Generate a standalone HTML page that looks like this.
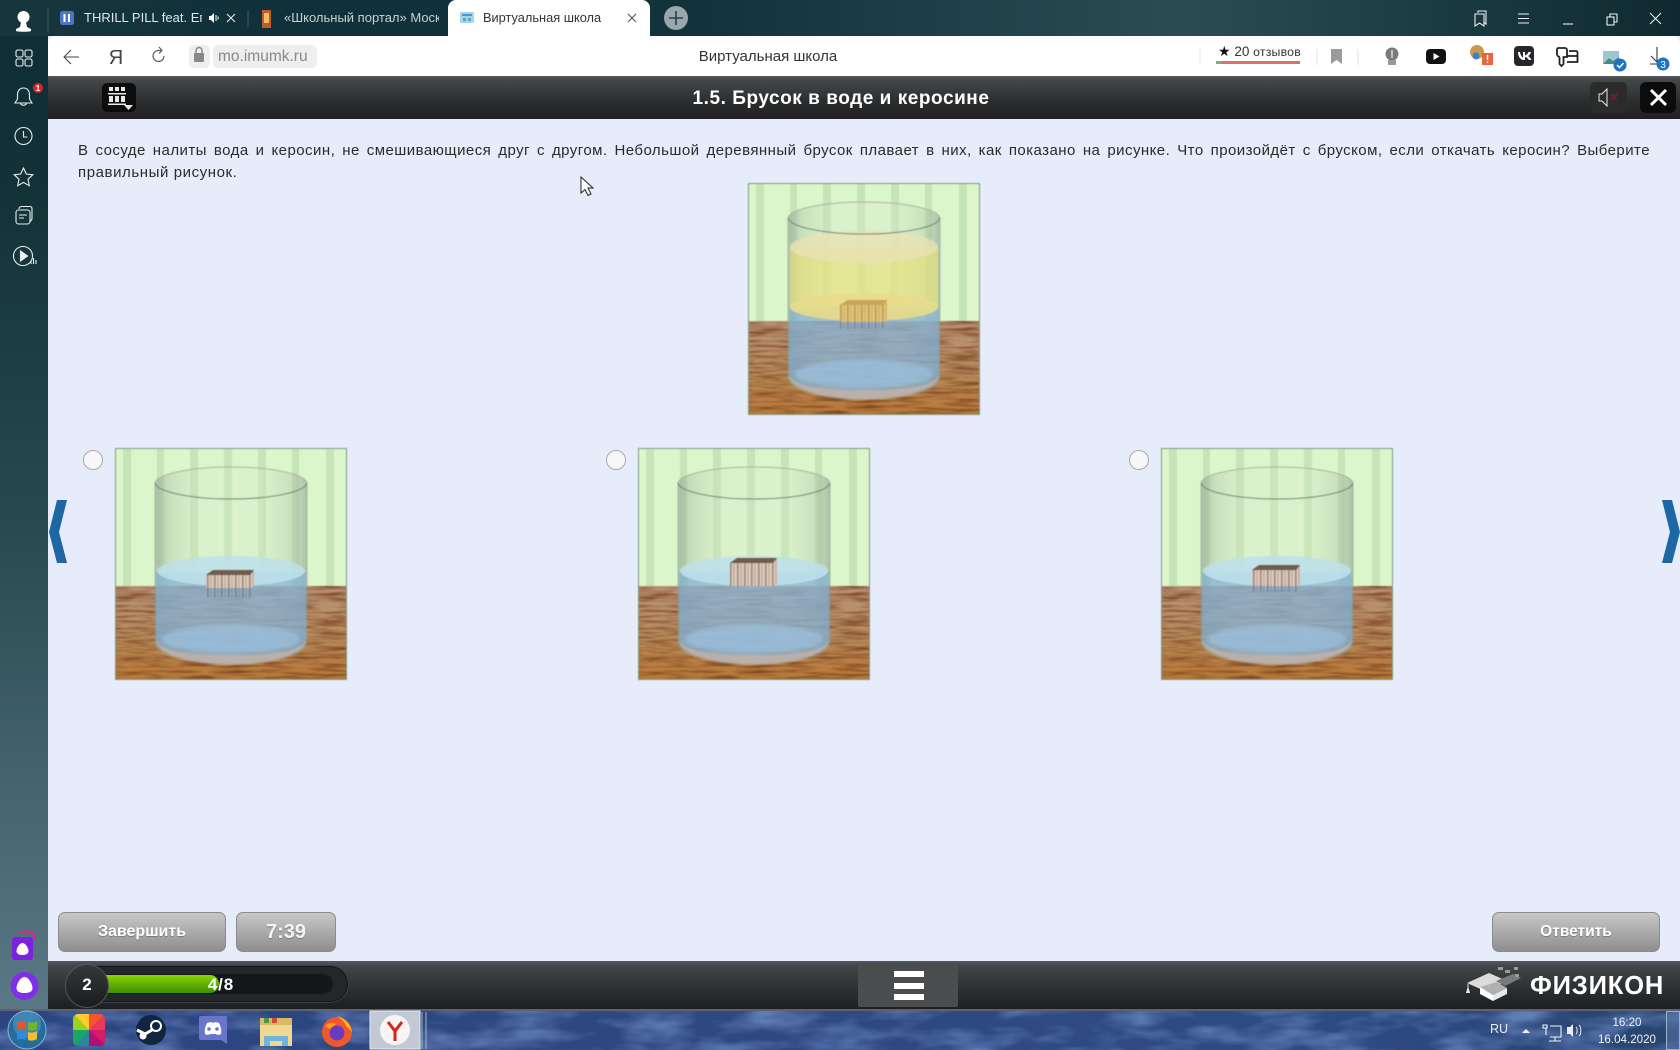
<!DOCTYPE html>
<html lang="ru"><head><meta charset="utf-8"><title>Виртуальная школа</title>
<style>
html,body{margin:0;padding:0;width:1680px;height:1050px;overflow:hidden;background:#e6ecfa;font-family:"Liberation Sans","DejaVu Sans",sans-serif}
.a{position:absolute}
.t{position:absolute;white-space:nowrap}
.pic{position:absolute;filter:blur(.45px)}
.btn{position:absolute;top:912px;height:38px;line-height:38px;border:1px solid #8b8b8b;border-radius:7px;background:linear-gradient(#c8c8c8,#8e8e8e);color:#fff;font-weight:bold;text-align:center;text-shadow:0 1px 1px #777}
</style></head><body>

<svg width="0" height="0" style="position:absolute">
<defs>
<filter id="wood" x="0" y="0" width="100%" height="100%" color-interpolation-filters="sRGB">
<feTurbulence type="fractalNoise" baseFrequency="0.03 0.35" numOctaves="3" seed="4"/>
<feColorMatrix values="0 0 0 0 .48  0 0 0 0 .26  0 0 0 0 .12  2 0 0 0 -.78"/>
<feComposite in2="SourceGraphic" operator="in"/>
<feMerge><feMergeNode in="SourceGraphic"/><feMergeNode/></feMerge>
</filter>
<filter id="sky" x="0" y="0" width="100%" height="100%" color-interpolation-filters="sRGB">
<feTurbulence type="fractalNoise" baseFrequency="0.016 0.05" numOctaves="3" seed="9"/>
<feColorMatrix values="0 0 0 0 .38  0 0 0 0 .49  0 0 0 0 .72  2.400 0 0 0 -.95"/>
<feComposite in2="SourceGraphic" operator="in"/>
<feMerge><feMergeNode in="SourceGraphic"/><feMergeNode/></feMerge>
</filter>
<filter id="b1"><feGaussianBlur stdDeviation="1.5"/></filter>
<filter id="b2"><feGaussianBlur stdDeviation=".7"/></filter>
<linearGradient id="tbl" x1="0" y1="0" x2="0" y2="1"><stop offset="0" stop-color="#b89478"/><stop offset=".5" stop-color="#b88c60"/><stop offset="1" stop-color="#b87836"/></linearGradient>
<linearGradient id="gl" x1="0" y1="0" x2="1" y2="0">
<stop offset="0" stop-color="#8a9b90" stop-opacity=".55"/><stop offset=".1" stop-color="#aebda6" stop-opacity=".38"/><stop offset=".3" stop-color="#d8e5ce" stop-opacity=".28"/><stop offset=".7" stop-color="#d8e5ce" stop-opacity=".28"/><stop offset=".9" stop-color="#aebda6" stop-opacity=".38"/><stop offset="1" stop-color="#8a9b90" stop-opacity=".58"/></linearGradient>
<pattern id="bs" width="7" height="30" patternUnits="userSpaceOnUse"><rect width="7" height="30" fill="#dccabc"/><rect x="1" width="1.6" height="30" fill="#a08a7c"/><rect x="4.500" width="1" height="30" fill="#b8a494"/></pattern>
<pattern id="by" width="7" height="30" patternUnits="userSpaceOnUse"><rect width="7" height="30" fill="#e0c478"/><rect x="1" width="1.6" height="30" fill="#bb9c58"/><rect x="4.500" width="1" height="30" fill="#cbae66"/></pattern>
<pattern id="br" width="7" height="30" patternUnits="userSpaceOnUse"><rect x="1" width="1.6" height="30" fill="#6f7f8c"/><rect x="4.500" width="1" height="30" fill="#7f8e9a"/></pattern>
<symbol id="bg" viewBox="0 0 232 232">
<rect width="232" height="138" fill="#dbf6ca"/>
<g fill="#c6e5b6"><rect x="8" width="8" height="138"/><rect x="42" width="7" height="138"/><rect x="75" width="8" height="138"/><rect x="109" width="8" height="138"/><rect x="143" width="8" height="138"/><rect x="177" width="7" height="138"/><rect x="211" width="8" height="138"/></g>
<rect y="138" width="232" height="94" fill="url(#tbl)" filter="url(#wood)"/>
<path d="M40 35A76 16 0 0 1 192 35V195C192 208 158 217 116 217S40 208 40 195Z" fill="url(#gl)"/>
</symbol>
<symbol id="water" viewBox="0 0 232 232">
<path d="M41 124V192C41 206 75 216 116 216S191 206 191 192V124Z" fill="#7eaedb" opacity=".66"/>
<path d="M41 192C41 206 75 216 116 216S191 206 191 192C186 205 150 207 116 207S46 205 41 192Z" fill="#c8b4a8" opacity=".75" filter="url(#b2)"/>
<ellipse cx="116" cy="191" rx="69" ry="14" fill="#9cc4e4" opacity=".65" filter="url(#b1)"/>
</symbol>
<symbol id="rim" viewBox="0 0 232 232">
<path d="M40 35V192M192 35V192" stroke="#8a9a8e" stroke-width="1" stroke-opacity=".55" fill="none"/>
<path d="M40 35C42 44 76 51 116 51S190 44 192 35" fill="none" stroke="#66796a" stroke-width="1.100" stroke-opacity=".8"/>
<path d="M40 35C42 26 76 19 116 19S190 26 192 35" fill="none" stroke="#a8b5a5" stroke-width="1"/>
<path d="M41 190v6M191 190v6" stroke="#9aa0a0" stroke-opacity=".6"/>
</symbol>
</defs>
</svg>

<!-- wallpaper chrome -->
<div class="a" style="left:0;top:0;width:48px;height:1011px;background:linear-gradient(#0f2c33 0,#133339 200px,#284950 520px,#44636d 780px,#5a7885 1011px)"></div>
<div class="a" style="left:0;top:0;width:1680px;height:36px;background:linear-gradient(90deg,#17363c 0,#10303a 300px,#12333c 700px,#2b4c53 1180px,#1d3e45 1400px,#0e2a30 1680px)"></div>

<!-- toolbar -->
<div class="a" style="left:48px;top:36px;width:1632px;height:40px;background:#fff;border-radius:8px 8px 0 0"></div>
<div class="a" style="left:448px;top:0;width:202px;height:37px;background:#fff;border-radius:8px 8px 0 0"></div>

<!-- tab text -->
<div class="t" style="left:84px;top:10px;width:118px;overflow:hidden;font-size:13px;line-height:16px;color:#dfe6e8">THRILL PILL feat. Егор Крид</div>
<div class="t" style="left:284px;top:10px;width:155px;overflow:hidden;font-size:13px;line-height:16px;color:#c8d2d5">«Школьный портал» Московская</div>
<div class="t" style="left:483px;top:10px;font-size:12.8px;line-height:16px;color:#333">Виртуальная школа</div>

<!-- address -->
<div class="a" style="left:189px;top:45px;width:21px;height:23px;border-radius:5px;background:#eee"></div>
<div class="a" style="left:213px;top:45px;width:104px;height:23px;border-radius:5px;background:#eee"></div>
<div class="t" style="left:218px;top:47px;font-size:15.5px;line-height:20px;color:#888">mo.imumk.ru</div>
<div class="t" style="left:668px;top:47px;width:200px;text-align:center;font-size:15px;line-height:20px;color:#333">Виртуальная школа</div>
<div class="t" style="left:1218px;top:42px;font-size:13.5px;line-height:18px;color:#333"><span style="color:#111;font-size:14px">★</span> 20 <span style="font-size:12.3px;letter-spacing:.2px">отзывов</span></div>
<div class="a" style="left:1216px;top:61px;width:84px;height:3px;background:linear-gradient(90deg,#7fb07a 0,#7fb07a 5px,#d8736a 6px)"></div>

<!-- header -->
<div class="a" style="left:48px;top:76px;width:1632px;height:43px;background:linear-gradient(#5a5d60 0,#46494b 6%,#2d2f31 55%,#1e2022 100%)"></div>
<div class="t" style="left:48px;top:87px;width:1586px;text-align:center;font-size:19px;line-height:24px;font-weight:bold;color:#fff;letter-spacing:.55px">1.5. Брусок в воде и керосине</div>

<!-- content -->
<div class="a" style="left:48px;top:119px;width:1632px;height:842px;background:#e7ecfa"></div>
<div class="a" style="left:78px;top:139.500px;width:1572px;font-size:15px;line-height:21px;color:#2b2b2b;letter-spacing:.45px;text-align:justify;text-align-last:justify">В сосуде налиты вода и керосин, не смешивающиеся друг с другом. Небольшой деревянный брусок плавает в них, как показано на рисунке. Что произойдёт с бруском, если откачать керосин? Выберите</div>
<div class="t" style="left:78px;top:161.500px;font-size:15px;line-height:21px;color:#2b2b2b;letter-spacing:.58px">правильный рисунок.</div>

<!-- top picture -->
<svg class="pic" style="left:748px;top:183px" width="232" height="232" viewBox="0 0 232 232">
<use href="#bg" width="232" height="232"/>
<path d="M42 64V124C42 135 75 139 116 139S190 135 190 124V64Z" fill="#e8e07a" opacity=".68"/>
<use href="#water" width="232" height="232"/>
<ellipse cx="116" cy="64" rx="74" ry="16" fill="#e9e2b4" opacity=".8"/>
<ellipse cx="116" cy="124" rx="74" ry="14" fill="#e8dc8c" opacity=".9"/>
<path d="M92 122L100 117H139V136L136 139H92Z" fill="url(#by)"/>
<path d="M92 122L100 117H139L135 122Z" fill="#c9a654"/>
<rect x="92" y="139" width="44" height="7" fill="url(#br)" opacity=".7"/>
<use href="#rim" width="232" height="232"/>
<rect x=".5" y=".5" width="231" height="231" fill="none" stroke="#7f9a84"/>
</svg>

<!-- A -->
<svg class="pic" style="left:115px;top:448px" width="232" height="232" viewBox="0 0 232 232">
<use href="#bg" width="232" height="232"/>
<use href="#water" width="232" height="232"/>
<ellipse cx="116" cy="123" rx="74" ry="15" fill="#bde0ea" opacity=".88"/>
<path d="M91 127L98 122H139V138L136 140H91Z" fill="url(#bs)"/>
<path d="M91 127L98 122H139L135 127Z" fill="#6e5c4e"/>
<rect x="91" y="140" width="45" height="10" fill="url(#br)" opacity=".8"/>
<use href="#rim" width="232" height="232"/>
<rect x=".5" y=".5" width="231" height="231" fill="none" stroke="#7f9a84"/>
</svg>
<!-- B -->
<svg class="pic" style="left:638px;top:448px" width="232" height="232" viewBox="0 0 232 232">
<use href="#bg" width="232" height="232"/>
<use href="#water" width="232" height="232"/>
<ellipse cx="116" cy="123" rx="74" ry="15" fill="#bde0ea" opacity=".88"/>
<path d="M92 115L99 110H139V136L136 138H92Z" fill="url(#bs)"/>
<path d="M92 115L99 110H139L135 115Z" fill="#6e5c4e"/>
<use href="#rim" width="232" height="232"/>
<rect x=".5" y=".5" width="231" height="231" fill="none" stroke="#7f9a84"/>
</svg>
<!-- C -->
<svg class="pic" style="left:1161px;top:448px" width="232" height="232" viewBox="0 0 232 232">
<use href="#bg" width="232" height="232"/>
<use href="#water" width="232" height="232"/>
<ellipse cx="116" cy="123" rx="74" ry="15" fill="#bde0ea" opacity=".88"/>
<path d="M91 122L98 117H139V136L136 138H91Z" fill="url(#bs)"/>
<path d="M91 122L98 117H139L135 122Z" fill="#6e5c4e"/>
<rect x="91" y="138" width="45" height="6" fill="url(#br)" opacity=".8"/>
<use href="#rim" width="232" height="232"/>
<rect x=".5" y=".5" width="231" height="231" fill="none" stroke="#7f9a84"/>
</svg>

<!-- buttons -->
<div class="btn" style="left:58px;width:166px;font-size:16px">Завершить</div>
<div class="btn" style="left:236px;width:98px;font-size:20px;color:#f4f4f4">7:39</div>
<div class="btn" style="left:1492px;width:166px;font-size:15.5px">Ответить</div>

<!-- bottom bar -->
<div class="a" style="left:48px;top:961px;width:1632px;height:48px;background:linear-gradient(#55585a 0,#44474a 10%,#2c2f31 60%,#1d2022 100%)"></div>
<div class="a" style="left:0;top:1009px;width:1680px;height:2px;background:#5c6272"></div>
<div class="a" style="left:70px;top:966px;width:278px;height:36px;border-radius:18px;background:#24272a;box-shadow:inset 0 0 0 1px #15171a,0 0 0 1px #3c3f42"></div>
<div class="a" style="left:100px;top:974px;width:233px;height:20px;border-radius:10px;background:#15181a"></div>
<div class="a" style="left:100px;top:975px;width:119px;height:18px;border-radius:0 9px 9px 0;background:linear-gradient(#8fd40a 0,#6fc000 30%,#3f9000 100%)"></div>
<div class="a" style="left:65px;top:964px;width:42px;height:42px;border-radius:50%;background:linear-gradient(#35383b,#1a1c1e);border:1px solid #55585b"></div>
<div class="t" style="left:66px;top:974px;width:42px;text-align:center;font-size:17px;line-height:22px;color:#fff;font-weight:bold">2</div>
<div class="t" style="left:191px;top:974px;width:60px;text-align:center;font-size:17px;line-height:22px;color:#fff;font-weight:bold;letter-spacing:.9px">4/8</div>
<div class="a" style="left:858px;top:963px;width:100px;height:44px;background:#4a4c4e;border-radius:2px"></div>
<div class="a" style="left:894px;top:971px;width:30px;height:6px;background:#fff"></div>
<div class="a" style="left:894px;top:983px;width:30px;height:6px;background:#fff"></div>
<div class="a" style="left:894px;top:994px;width:30px;height:6px;background:#fff"></div>
<div class="t" style="left:1530px;top:970px;font-size:25.500px;line-height:32px;font-weight:bold;color:#fff;letter-spacing:.85px">ФИЗИКОН</div>

<!-- taskbar -->
<svg class="a" style="left:0;top:1011px" width="1680" height="39"><defs><linearGradient id="tb"><stop offset="0" stop-color="#2c4580"/><stop offset=".8" stop-color="#2e4a84"/><stop offset="1" stop-color="#27456e"/></linearGradient></defs><rect width="1680" height="39" fill="url(#tb)" filter="url(#sky)"/></svg>
<div class="t" style="left:1490px;top:1021px;font-size:12.500px;line-height:16px;color:#e6ecf5">RU</div>
<div class="t" style="left:1587px;top:1014px;width:80px;text-align:center;font-size:11.600px;line-height:17px;color:#eef2f8">16:20<br>16.04.2020</div>

<!-- icon overlay -->
<svg class="a" style="left:0;top:0" width="1680" height="1050" viewBox="0 0 1680 1050" fill="none">
<g fill="#fff"><circle cx="23.500" cy="17" r="6"/><path d="M21 22h5l1 5 4 2v2c-2 1-13 1-15 0v-2l4-2z"/></g>
<path d="M48 8v25" stroke="#3a5a60"/>
<g stroke="#e6eeef" stroke-width="1.100">
<rect x="16" y="50" width="7" height="7" rx="1.800"/><rect x="25" y="50" width="7" height="7" rx="1.800"/><rect x="16" y="59" width="7" height="7" rx="1.800"/><rect x="25" y="59" width="7" height="7" rx="1.800"/>
<path d="M23.500 88c-4 0-6 3-6 7v4l-2.500 4h17l-2.500-4v-4c0-4-2-7-6-7zM20.500 103c.5 3 5.500 3 6 0"/>
<circle cx="23.500" cy="136" r="8.500"/><path d="M23.500 131v6h4"/>
<path d="M23.500 168l2.800 6 6.500.8-4.800 4.400 1.300 6.500-5.800-3.300-5.800 3.300 1.300-6.500-4.800-4.400 6.500-.8z"/>
<rect x="16" y="210" width="14" height="14" rx="2.500"/><path d="M19 209c0-2 1-2.500 3-2.500h8c1.500 0 2 1 2 2.500v9c0 2-1 3-2 3M19 215h8M19 218h5"/>
<circle cx="23" cy="256" r="9.500"/><path d="M20.500 251l7 5-7 5z" fill="#e6eeef"/><path d="M31 264v-3M33.500 264v-6M36 264v-4"/>
</g>
<circle cx="38" cy="88" r="5" fill="#d8262c"/>
<text x="38" y="91" font-family="Liberation Sans" font-size="8" font-weight="bold" fill="#fff" text-anchor="middle">1</text>
<path d="M20 933c6-3 12-2 15 3v3" stroke="#e0228c" stroke-width="2"/>
<rect x="12" y="937" width="21" height="23" rx="3" fill="#7a22e0"/>
<path d="M22.500 943c3 0 6 5 6 8s-3 4-6 4-6-1-6-4 3-8 6-8z" fill="#fff"/>
<circle cx="24.500" cy="986" r="14" fill="#7f2fe8"/>
<path d="M24.500 977c4 0 8 7 8 11s-4 5-8 5-8-1-8-5 4-11 8-11z" fill="#fff"/>
<!-- tabs -->
<rect x="60" y="11" width="14" height="14" rx="2.500" fill="#4a77c4"/><path d="M64.500 14v8M69 14v8" stroke="#fff" stroke-width="2"/>
<path d="M209 16h2l3-3v10l-3-3h-2z" fill="#fff"/><path d="M216 15v6M218 16.500v3" stroke="#fff"/>
<path d="M227 14l8 8M235 14l-8 8" stroke="#dfe6e8" stroke-width="1.100"/>
<path d="M248 10v17" stroke="#3c5a60"/>
<rect x="262" y="10" width="9" height="18" fill="#c25a2c"/><rect x="264" y="13" width="5" height="10" fill="#e8c060"/>
<rect x="460" y="12" width="14" height="11" rx="1" fill="#a8d4e8"/><rect x="462" y="14" width="10" height="2" fill="#4a9ac4"/><rect x="463" y="18" width="3" height="3" fill="#5aa8c8"/><rect x="468" y="18" width="3" height="3" fill="#5aa8c8"/>
<path d="M628 14l8 8M636 14l-8 8" stroke="#555" stroke-width="1.100"/>
<circle cx="676" cy="18" r="12" fill="#98a8ac"/><path d="M676 11v14M669 18h14" stroke="#24424a" stroke-width="1.600"/>
<!-- window buttons -->
<g stroke="#e8eef0" stroke-width="1.100">
<path d="M1475 14h9v12l-4.500-3-4.500 3zM1478 13v-2h8v13l-2-1.500"/>
<path d="M1518 14h11M1518 18.500h11M1518 23h11"/>
<path d="M1563 24h10"/>
<rect x="1607" y="17" width="7" height="8"/><path d="M1610 17v-3h7v8h-3"/>
<path d="M1650 13l11 11M1661 13l-11 11"/>
</g>
<!-- toolbar -->
<path d="M79 57H65M71 50l-7 7 7 7" stroke="#444" stroke-width="1.100"/>
<text x="116" y="64" font-family="Liberation Sans" font-size="20" fill="#444" text-anchor="middle">Я</text>
<path d="M164 56a5.500 5.500 0 1 1-5-5.500h2M159 47l3 3.500-3 3" stroke="#555" stroke-width="1.100"/>
<rect x="194" y="53" width="10" height="9" rx="1" fill="#888"/><path d="M196 53v-2.500a3 3 0 0 1 6 0V53" stroke="#888" stroke-width="1.500"/>
<path d="M1200 49v16M1317 49v16M1358 49v16" stroke="#e2e2e2"/>
<path d="M1331 49h11v15l-5.500-4-5.500 4z" fill="#9b9b9b"/>
<circle cx="1392" cy="54" r="6.500" fill="#7a7a7a"/><rect x="1388" y="60" width="8" height="5" fill="#999"/><path d="M1392 50v8" stroke="#ddd" stroke-width="1.500"/>
<rect x="1426" y="49" width="20" height="15" rx="4" fill="#111"/><path d="M1433.500 53l6 3.500-6 3.500z" fill="#fff"/>
<circle cx="1477" cy="52" r="7" fill="#c79a50"/><circle cx="1476" cy="56" r="3.500" fill="#3a80d0"/><rect x="1482" y="53" width="11" height="12" fill="#e8663e"/><path d="M1487.500 55v5M1487.500 61.500v1.500" stroke="#fff" stroke-width="1.500"/>
<rect x="1514" y="46" width="20" height="20" rx="4" fill="#26272b"/>
<path d="M1518 52c0 4 2 8 6 8h1v-3c2 0 3 2 4 3h2.500c-1-2-2.500-3.500-3.500-4 1-.5 2.500-2 3-4h-2.500c-.5 1.500-2 3-3.500 3.500V52h-2v5.500c-1-.5-2.500-2-3-5.500z" fill="#fff"/>
<path d="M1558 48h7a2 2 0 0 1 2 2v7h-2l-1.500 0v7l-2 2-2-2v-7H1560a3 3 0 0 1-3-3v-4a2 2 0 0 1 1-2zM1569 51h7a1.500 1.500 0 0 1 1.500 1.500V62h-10.500M1567 56h10" stroke="#222" stroke-width="1.800"/>
<rect x="1603" y="51" width="16" height="13" fill="#9cc6d6"/><path d="M1603 64l6-6 4 3 6-4v7z" fill="#4f8a78"/>
<circle cx="1620" cy="65" r="6.500" fill="#1d73c4"/><path d="M1617 65l2.500 2.500 4-4.500" stroke="#fff" stroke-width="1.500"/>
<path d="M1657 47v15M1651 56l6 6M1650 64h8" stroke="#333" stroke-width="1.100"/>
<circle cx="1663" cy="64" r="6.500" fill="#1d73c4"/><text x="1663" y="68" font-family="Liberation Sans" font-size="10" fill="#fff" text-anchor="middle">3</text>
<!-- header buttons -->
<rect x="102" y="83" width="34" height="29" rx="5" fill="#0c0c0c"/>
<g fill="#e8e8e8"><rect x="109" y="87" width="4" height="4"/><rect x="115" y="87" width="4" height="4"/><rect x="121" y="87" width="4" height="4"/><rect x="108" y="93" width="18" height="1.500"/><rect x="109" y="96" width="4" height="6"/><rect x="115" y="96" width="4" height="6"/><rect x="121" y="96" width="4" height="6"/><rect x="108" y="103.500" width="18" height="1.500"/><path d="M124 105h9l-4.500 5z"/></g>
<rect x="1590" y="82" width="37" height="31" rx="5" fill="#2a2c2b"/>
<path d="M1599 94h3l5-5v17l-5-5h-3z" stroke="#e8e8e8" stroke-width="1"/>
<path d="M1611 94l6 6M1617 94l-6 6" stroke="#6e2226" stroke-width="1.800"/>
<rect x="1640" y="82" width="36" height="31" rx="6" fill="#0c0c0c"/>
<path d="M1651 90l15 15M1666 90l-15 15" stroke="#fff" stroke-width="3"/>
<!-- chevrons -->
<path d="M57 500H67L59 532L67 563H57L49 532Z" fill="#1e66a4"/>
<path d="M1662 500H1672L1680 532L1672 563H1662L1670 532Z" fill="#1e66a4"/>
<!-- radios -->
<g fill="#f7f7f7" stroke="#a9a9a9"><circle cx="93" cy="460" r="9.500"/><circle cx="616" cy="460" r="9.500"/><circle cx="1139" cy="460" r="9.500"/></g>
<!-- cursor -->
<path d="M581 177v16l4-3.500 3 6 3-1.500-3-6h5z" fill="#fff" stroke="#222"/>
<!-- physicon logo -->
<path d="M1467 983L1489 973L1507 981L1485 991Z" fill="#dcdcdc"/>
<path d="M1496 981L1513 974L1521 978L1505 986Z" fill="#7a7a7a"/>
<path d="M1480 987L1497 982L1507 988L1493 995Z" fill="#b0b0b0"/>
<path d="M1480 987L1493 995V1001L1480 994Z" fill="#fff"/><path d="M1493 995L1507 988V994L1493 1001Z" fill="#e8e8e8"/>
<path d="M1468 984v4" stroke="#ddd"/><path d="M1468 986l-2 7h4z" fill="#eee"/>
<g fill="#9a9a9a"><rect x="1498" y="967" width="5" height="3"/><rect x="1514" y="967" width="4" height="3"/><rect x="1505" y="970" width="5" height="3"/><rect x="1515" y="974" width="4" height="3"/></g>
<!-- taskbar icons -->
<circle cx="27" cy="1030" r="19" fill="#256c9e" stroke="#8fb4ca"/>
<circle cx="27" cy="1024" r="14" fill="#6dbbe0" opacity=".35"/>
<path d="M17 1022c3-2 6-1 9 0v8c-3-1-6-2-9 0z" fill="#e5562f"/><path d="M28 1022c3 1 6 1 9-1v8c-3 2-6 2-9 1z" fill="#74b52e"/><path d="M17 1032c3-2 6-1 9 0v8c-3-1-6-2-9 0z" fill="#2f8be0"/><path d="M28 1032c3 1 6 1 9-1v8c-3 2-6 2-9 1z" fill="#f2bf2f"/>
<circle cx="151" cy="1030" r="15" fill="#10263f"/><circle cx="156" cy="1026" r="5" stroke="#fff" stroke-width="2"/><circle cx="143" cy="1036" r="3.500" fill="#fff"/><path d="M137 1030l8 4 7-4" stroke="#fff" stroke-width="3"/>
<path d="M201 1016h24a2 2 0 0 1 2 2v26l-6-4H201a2 2 0 0 1-2-2v-20a2 2 0 0 1 2-2z" fill="#6a76cc"/>
<path d="M205 1034c-1-5 1-9 2-11 3-1 5-1 6 0 1-1 3-1 6 0 1 2 3 6 2 11-2 1-4 1-5 0l-3 0-3 0c-1 1-3 1-5 0z" fill="#fff"/><circle cx="209" cy="1029" r="1.800" fill="#6a76cc"/><circle cx="217" cy="1029" r="1.800" fill="#6a76cc"/>
<path d="M260 1018h32v28h-32z" fill="#f0d890"/><path d="M260 1018h32v7h-32z" fill="#d8b860"/><rect x="264" y="1018" width="5" height="5" fill="#4a9a4a"/><rect x="272" y="1018" width="5" height="5" fill="#d24a3a"/>
<path d="M264 1036h24v10h-6v-5h-12v5h-6z" fill="#6fb4de"/>
<circle cx="337" cy="1032" r="15" fill="#f0582a"/><path d="M337 1016c8 2 14 9 15 16l-6-6c-1-4-5-7-9-10z" fill="#ffb42a"/><circle cx="337" cy="1033" r="7.500" fill="#6a3ac0"/><path d="M325 1026c3-3 7-4 11-2l-6 5z" fill="#ff9a20"/>
<rect x="370" y="1011" width="50" height="38" fill="#c3c9d4" stroke="#e6eaf0"/>
<circle cx="395" cy="1030" r="15" fill="#f7f4f2"/><path d="M388 1022l7 9 7-9M395 1031v10" stroke="#d6231e" stroke-width="3"/>
<path d="M422 1012v37M426 1012v37" stroke="#aab2c4"/>
<path d="M1522 1033l4-4 4 4z" fill="#f0f4f8"/>
<path d="M1543 1025h4v3h-4zM1550 1026h11v11h-11M1546 1028v7M1555 1037v4M1549 1041h12" stroke="#eef2f8" stroke-width="1.100"/>
<path d="M1567 1027h3l3-3v13l-3-3h-3z" fill="#e8ecf2"/><path d="M1576 1027c1.500 1 1.500 6 0 7M1579 1025c2.500 2 2.500 9 0 11" stroke="#e8ecf2"/>
<rect x="1666.500" y="1011.500" width="13" height="38" fill="#5e78a8" fill-opacity=".5" stroke="#9db0cc"/>
</svg>

<!-- photos tile -->
<div class="a" style="left:73px;top:1014px;width:32px;height:32px;border-radius:5px;background:conic-gradient(#f5572a 0 12%,#e83a5a 12% 25%,#d81a6a 25% 37%,#b0107a 37% 50%,#2a8a9a 50% 62%,#18a868 62% 75%,#9ad21f 75% 88%,#ffcb2f 88% 100%)"></div>
</body></html>
